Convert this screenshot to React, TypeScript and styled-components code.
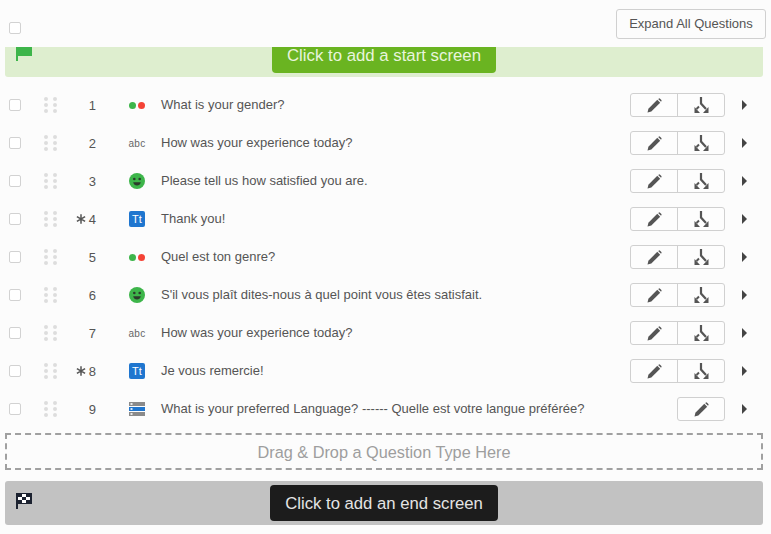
import React from "react";
import styled, { createGlobalStyle } from "styled-components";

const Global = createGlobalStyle`
  html, body { margin: 0; padding: 0; background: #fcfcfc; }
  body { font-family: "Liberation Sans", Arial, sans-serif; color: #555; }
  * { box-sizing: border-box; }
`;

const Page = styled.div`
  width: 771px;
  height: 534px;
  overflow: hidden;
  background: #fcfcfc;
`;

const TopBar = styled.div`
  height: 47px;
  padding: 9px 5px 0 9px;
  display: flex;
  justify-content: space-between;
  align-items: flex-start;
`;

const Check = styled.span<{ $top?: number }>`
  display: block;
  width: 12px;
  height: 12px;
  flex: none;
  margin-top: ${(p) => p.$top ?? 0}px;
  border: 1px solid #d2d2d2;
  border-radius: 2px;
  background: #fff;
`;

const ExpandButton = styled.button`
  width: 150px;
  height: 30px;
  padding: 0 0 2px;
  border: 1px solid #d0d0d0;
  border-radius: 3px;
  background: #fcfcfc;
  color: #555;
  font: 13px "Liberation Sans", Arial, sans-serif;
`;

const StartBanner = styled.div`
  position: relative;
  height: 30px;
  margin: 0 8px 0 5px;
  background: #deeecf;
  border-radius: 0 0 3px 3px;
  overflow: hidden;
  display: flex;
  justify-content: center;
  align-items: flex-end;
  padding-bottom: 4px;
`;

const BannerFlag = styled.svg`
  position: absolute;
  left: 11px;
  top: 0;
`;

const StartButton = styled.button`
  width: 224px;
  height: 34px;
  flex: none;
  padding: 0;
  border: 0;
  border-radius: 4px;
  background: #6ab421;
  color: #e8f4dc;
  font: 16.8px "Liberation Sans", Arial, sans-serif;
`;

const List = styled.div`
  margin-top: 9px;
`;

const Row = styled.div`
  height: 38px;
  display: flex;
  align-items: center;
  padding: 0 0 0 9px;
`;

const Grip = styled.div`
  width: 13px;
  margin-left: 23px;
  display: grid;
  grid-template-columns: repeat(2, 4px);
  grid-auto-rows: 4px;
  column-gap: 5px;
  row-gap: 2px;
  flex: none;
  span {
    background: #dddddd;
    border-radius: 50%;
  }
`;

const Num = styled.div`
  width: 39px;
  flex: none;
  text-align: right;
  font-size: 13px;
  color: #555;
  display: flex;
  justify-content: flex-end;
  align-items: center;
  gap: 3px;
`;

const TypeIcon = styled.div`
  width: 16px;
  height: 16px;
  margin-left: 33px;
  flex: none;
  display: flex;
  align-items: center;
  justify-content: center;
`;

const Dots = styled.div`
  display: flex;
  gap: 2px;
  span {
    width: 7px;
    height: 7px;
    border-radius: 50%;
  }
  span:first-child { background: #3db54a; }
  span:last-child { background: #f44336; }
`;

const Abc = styled.span`
  font-size: 10px;
  letter-spacing: 0.3px;
  color: #666;
  white-space: nowrap;
`;

const TextBadge = styled.div`
  width: 16px;
  height: 16px;
  border-radius: 2px;
  background: #1f76cf;
  color: #fff;
  font-size: 11px;
  display: flex;
  align-items: center;
  justify-content: center;
`;

const Title = styled.div`
  margin-left: 16px;
  padding-bottom: 2px;
  flex: 1;
  font-size: 13px;
  color: #555;
  white-space: nowrap;
`;

const Actions = styled.div`
  display: flex;
  width: 95px;
  height: 24px;
  flex: none;
  justify-content: flex-end;
`;

const ActionGroup = styled.div`
  display: flex;
  height: 24px;
  border: 1px solid #d0d0d0;
  border-radius: 3px;
  background: #fdfdfd;
`;

const ActionCell = styled.div`
  width: 46px;
  display: flex;
  align-items: center;
  justify-content: center;
  & + & {
    width: 47px;
    border-left: 1px solid #d0d0d0;
  }
`;

const Caret = styled.svg`
  margin-left: 17px;
  margin-right: 24px;
  flex: none;
`;

const DropZone = styled.div`
  margin: 5px 8px 0 5px;
  height: 37px;
  padding-top: 1px;
  border: 2px dashed #a0a0a0;
  color: #9e9e9e;
  font-size: 16.3px;
  display: flex;
  align-items: center;
  justify-content: center;
`;

const EndBanner = styled.div`
  position: relative;
  margin: 11px 8px 0 5px;
  height: 44px;
  background: #c2c2c2;
  border-radius: 3px;
  display: flex;
  justify-content: center;
  align-items: center;
`;

const EndFlag = styled.svg`
  position: absolute;
  left: 11px;
  top: 12px;
`;

const EndButton = styled.button`
  width: 228px;
  height: 36px;
  padding: 1px 0 0;
  border: 0;
  border-radius: 4px;
  background: #1c1c1c;
  color: #e4e4e4;
  font: 16.7px "Liberation Sans", Arial, sans-serif;
`;

const Pencil = () => (
  <svg width="15" height="15" viewBox="0 0 14 14">
    <path d="M0.5 13.5 L1.3 10 L9.6 1.7 L12.3 4.4 L4 12.7 Z" fill="#555" />
    <path d="M10.4 0.9 L11.3 0.4 Q11.8 0.2 12.2 0.6 L13.4 1.8 Q13.8 2.2 13.5 2.8 L13.1 3.6 Z" fill="#555" />
  </svg>
);

const Branch = () => (
  <svg width="15" height="16" viewBox="0 0 15 16">
    <path d="M7 0 V6.5 L12 12" fill="none" stroke="#555" strokeWidth="2.2" />
    <path d="M14.5 10 V16 H9 Z" fill="#555" />
    <path d="M5 9.5 L2.5 12" fill="none" stroke="#555" strokeWidth="2" />
    <path d="M0.5 10 V16 H6 Z" fill="#555" />
  </svg>
);

const Asterisk = () => (
  <svg width="10" height="10" viewBox="0 0 10 10">
    <path d="M5 0.3 V9.7 M0.9 2.6 L9.1 7.4 M9.1 2.6 L0.9 7.4" stroke="#555" strokeWidth="1.5" />
  </svg>
);

const Smile = () => (
  <svg width="16" height="16" viewBox="0 0 16 16">
    <circle cx="8" cy="8" r="8" fill="#3db54a" />
    <circle cx="5.3" cy="6" r="1.3" fill="#2b3a2b" />
    <circle cx="10.7" cy="6" r="1.3" fill="#2b3a2b" />
    <path d="M4.2 9.2 H11.8 Q11 12.4 8 12.4 Q5 12.4 4.2 9.2 Z" fill="#2b3a2b" />
  </svg>
);

const ListIcon = () => (
  <svg width="16" height="14" viewBox="0 0 16 14">
    <rect y="0" width="16" height="4" fill="#8a8a8a" />
    <rect y="5" width="16" height="4" fill="#1f76cf" />
    <rect y="10" width="16" height="4" fill="#8a8a8a" />
    <rect x="1.5" y="1.2" width="2" height="1.6" fill="#fff" />
    <rect x="1.5" y="6.2" width="2" height="1.6" fill="#fff" />
    <rect x="1.5" y="11.2" width="2" height="1.6" fill="#fff" />
  </svg>
);

type Kind = "dots" | "abc" | "smile" | "text" | "list";

const questions: { n: number; kind: Kind; text: string; req?: boolean; single?: boolean }[] = [
  { n: 1, kind: "dots", text: "What is your gender?" },
  { n: 2, kind: "abc", text: "How was your experience today?" },
  { n: 3, kind: "smile", text: "Please tell us how satisfied you are." },
  { n: 4, kind: "text", text: "Thank you!", req: true },
  { n: 5, kind: "dots", text: "Quel est ton genre?" },
  { n: 6, kind: "smile", text: "S'il vous plaît dites-nous à quel point vous êtes satisfait." },
  { n: 7, kind: "abc", text: "How was your experience today?" },
  { n: 8, kind: "text", text: "Je vous remercie!", req: true },
  { n: 9, kind: "list", text: "What is your preferred Language? ------ Quelle est votre langue préférée?", single: true },
];

const KindIcon = ({ kind }: { kind: Kind }) => {
  if (kind === "dots") return <Dots><span /><span /></Dots>;
  if (kind === "abc") return <Abc>abc</Abc>;
  if (kind === "smile") return <Smile />;
  if (kind === "text") return <TextBadge>Tt</TextBadge>;
  return <ListIcon />;
};

export default function App() {
  return (
    <Page>
      <Global />
      <TopBar>
        <Check $top={13} />
        <ExpandButton>Expand All Questions</ExpandButton>
      </TopBar>
      <StartBanner>
        <BannerFlag width="16" height="14" viewBox="0 0 16 14">
          <rect width="16" height="9" fill="#3db54a" />
          <rect width="2" height="14" fill="#3db54a" />
        </BannerFlag>
        <StartButton>Click to add a start screen</StartButton>
      </StartBanner>
      <List>
        {questions.map((q) => (
          <Row key={q.n}>
            <Check />
            <Grip>
              {Array.from({ length: 6 }, (_, i) => <span key={i} />)}
            </Grip>
            <Num>
              {q.req && <Asterisk />}
              {q.n}
            </Num>
            <TypeIcon><KindIcon kind={q.kind} /></TypeIcon>
            <Title>{q.text}</Title>
            <Actions>
              <ActionGroup>
                <ActionCell><Pencil /></ActionCell>
                {!q.single && <ActionCell><Branch /></ActionCell>}
              </ActionGroup>
            </Actions>
            <Caret width="5" height="10" viewBox="0 0 5 10">
              <path d="M0 0 L5 5 L0 10 Z" fill="#444" />
            </Caret>
          </Row>
        ))}
      </List>
      <DropZone>Drag &amp; Drop a Question Type Here</DropZone>
      <EndBanner>
        <EndFlag width="16" height="16" viewBox="0 0 16 16">
          <rect width="16" height="11" fill="#1c2230" />
          <rect width="2" height="16" fill="#1c2230" />
          <rect x="6" y="1" width="4" height="3" fill="#fff" />
          <rect x="2" y="4" width="4" height="3" fill="#fff" />
          <rect x="10" y="4" width="4" height="3" fill="#fff" />
          <rect x="6" y="7" width="4" height="3" fill="#fff" />
        </EndFlag>
        <EndButton>Click to add an end screen</EndButton>
      </EndBanner>
    </Page>
  );
}
